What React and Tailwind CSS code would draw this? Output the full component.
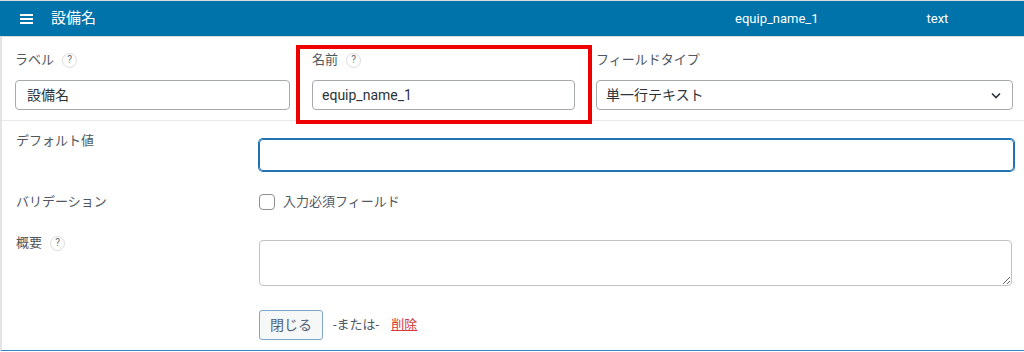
import React from 'react'

const Help = () => (
  <span className="inline-flex items-center justify-center w-[15px] h-[15px] rounded-full border border-[#dcdcde] text-[10px] leading-none text-[#646970] ml-[8px]">
    ?
  </span>
)

const App = () => {
  return (
    <div
      className="w-[1024px] h-[352px] bg-white relative overflow-hidden text-[#50575e]"
      style={{ fontFamily: 'Roboto, "Noto Sans CJK JP", sans-serif' }}
    >
      {/* header */}
      <div className="border-t border-[#dcdcde]">
        <div className="h-[36px] bg-[#0073aa] flex items-center text-white border-b border-[#dcdcde]">
          <svg className="ml-[20px]" width="13" height="10" viewBox="0 0 13 10">
            <rect x="0" y="0" width="13" height="2" fill="#fff" />
            <rect x="0" y="4" width="13" height="2" fill="#fff" />
            <rect x="0" y="8" width="13" height="2" fill="#fff" />
          </svg>
          <span className="ml-[18px] text-[15px]">設備名</span>
          <span className="ml-[639px] text-[13px]">equip_name_1</span>
          <span className="ml-[108px] text-[13px]">text</span>
        </div>
      </div>

      {/* body */}
      <div className="border-l-2 border-[#e2e4e7] h-[314px] border-b border-b-[#3582c4]">
        {/* top row */}
        <div className="flex h-[84px] border-b border-[#e8e8e8] pt-[14px]">
          <div className="w-[294px] pl-[13px]">
            <div className="h-[18px] flex items-center text-[13px]">ラベル<Help /></div>
            <div className="mt-[11px] h-[30px] w-[275px] border border-[#a7aaad] rounded-[4px] flex items-center px-[11px] text-[14px] text-[#2c3338]">設備名</div>
          </div>
          <div className="w-[300px] pl-[16px]">
            <div className="h-[18px] flex items-center text-[13px]">名前<Help /></div>
            <div className="mt-[11px] h-[30px] w-[263px] border border-[#a7aaad] rounded-[4px] flex items-center px-[9px] text-[14px] text-[#2c3338]">equip_name_1</div>
          </div>
          <div className="w-[417px]">
            <div className="h-[18px] flex items-center text-[13px]">フィールドタイプ</div>
            <div className="mt-[11px] h-[30px] w-[417px] border border-[#a7aaad] rounded-[4px] flex items-center justify-between pl-[9px] pr-[10px] text-[14px] text-[#2c3338]">
              <span>単一行テキスト</span>
              <svg width="12" height="12" viewBox="0 0 12 12" fill="none">
                <path d="M2 4.5 L6 8.5 L10 4.5" stroke="#2c3338" strokeWidth="1.6" />
              </svg>
            </div>
          </div>
        </div>

        {/* default value */}
        <div className="flex items-start pl-[14px] pr-[10px] pt-[11px]">
          <div className="w-[243px] h-[18px] flex items-center text-[13px]">デフォルト値</div>
          <div className="mt-[7px] flex-1 h-[32px] border border-[#2271b1] shadow-[0_0_0_1px_#2271b1] rounded-[4px]" />
        </div>

        {/* validation */}
        <div className="flex items-center pl-[14px] mt-[23px] h-[16px]">
          <div className="w-[243px] text-[13px]">バリデーション</div>
          <div className="w-[16px] h-[16px] border border-[#8c8f94] rounded-[4px]" />
          <span className="ml-[8px] text-[13px]">入力必須フィールド</span>
        </div>

        {/* description */}
        <div className="flex items-start pl-[14px] pr-[12px] mt-[24px]">
          <div className="w-[243px] h-[18px] flex items-center text-[13px]">概要<Help /></div>
          <textarea className="mt-[6px] flex-1 h-[46px] border border-[#c3c4c7] rounded-[4px] outline-none" />
        </div>

        {/* actions */}
        <div className="flex items-center pl-[257px] mt-[24px]">
          <div className="h-[30px] px-[10px] flex items-center border border-[#7ea6cb] bg-[#f6f7f7] rounded-[3px] text-[14px] text-[#50627a]">閉じる</div>
          <span className="ml-[10px] text-[13px]">-または-</span>
          <span className="ml-[12px] text-[13px] text-[#d63638] underline">削除</span>
        </div>
      </div>

      {/* annotation frame */}
      <div className="absolute left-[296px] top-[45px] w-[296px] h-[79px] border-4 border-[#ee0000]" />
    </div>
  )
}

export default App
